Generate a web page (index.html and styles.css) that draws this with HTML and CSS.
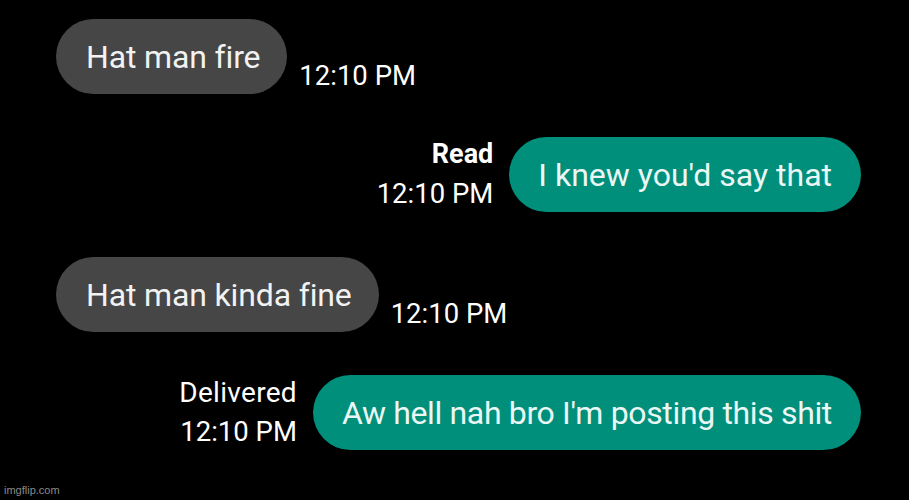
FILE: index.html
```html
<!DOCTYPE html>
<html lang="en">
  <head>
    <meta charset="UTF-8" />
    <meta name="viewport" content="width=device-width, initial-scale=1.0" />
    <title>Chat</title>
    <link rel="stylesheet" href="styles.css">
  </head>
  <body>
    <div class="chat">
      <div class="row incoming">
        <div class="bubble">Hat man fire</div>
        <div class="time">12:10 PM</div>
      </div>

      <div class="row outgoing">
        <div class="meta">
          <div class="status read">Read</div>
          <div class="time">12:10 PM</div>
        </div>
        <div class="bubble">I knew you'd say that</div>
      </div>

      <div class="row incoming lower">
        <div class="bubble">Hat man kinda fine</div>
        <div class="time">12:10 PM</div>
      </div>

      <div class="row outgoing">
        <div class="meta">
          <div class="status">Delivered</div>
          <div class="time">12:10 PM</div>
        </div>
        <div class="bubble narrow">Aw hell nah bro I'm posting this shit</div>
      </div>
    </div>

    <div class="watermark">imgflip.com</div>
  </body>
</html>
```

FILE: styles.css
```css
/* General */
body {
  margin: 0;
  background: #000;
  color: #fff;
  font-family: Roboto, "Noto Sans", sans-serif;
  font-variant-ligatures: none;
  width: 909px;
  height: 500px;
  overflow: hidden;
  position: relative;
}

/* Message list */
.chat {
  display: flex;
  flex-direction: column;
  gap: 43px;
  padding: 19px 48px 0 56px;
}

.row {
  display: flex;
  align-items: center;
  height: 75px;
}

.row.lower {
  margin-top: 2px;
}

.bubble {
  height: 75px;
  padding: 0 29px;
  border-radius: 38px;
  display: flex;
  align-items: center;
  font-size: 32px;
  white-space: nowrap;
}

.bubble.narrow {
  letter-spacing: -0.35px;
}

.time {
  font-size: 27.5px;
  color: #fff;
}

/* Received */
.incoming .bubble {
  background: #464646;
  color: #f2f2f2;
  padding: 0 27px 0 30px;
  letter-spacing: -0.15px;
}

.incoming .time {
  align-self: flex-end;
  margin-left: 12px;
  margin-bottom: 2px;
}

/* Sent */
.outgoing {
  justify-content: flex-end;
}

.outgoing .bubble {
  background: #008f7b;
  color: #eaf7f4;
}

.meta {
  display: flex;
  flex-direction: column;
  align-items: flex-end;
  margin-right: 16px;
  line-height: 39px;
  margin-top: -2px;
}

.status {
  font-size: 28px;
  letter-spacing: 0.3px;
}

.status.read {
  font-weight: bold;
  font-size: 27px;
  letter-spacing: 0;
}

/* Watermark */
.watermark {
  position: absolute;
  left: 4px;
  bottom: 4px;
  font-size: 11px;
  color: #8a8a8a;
  font-family: "Liberation Sans", Arial, sans-serif;
}
```
